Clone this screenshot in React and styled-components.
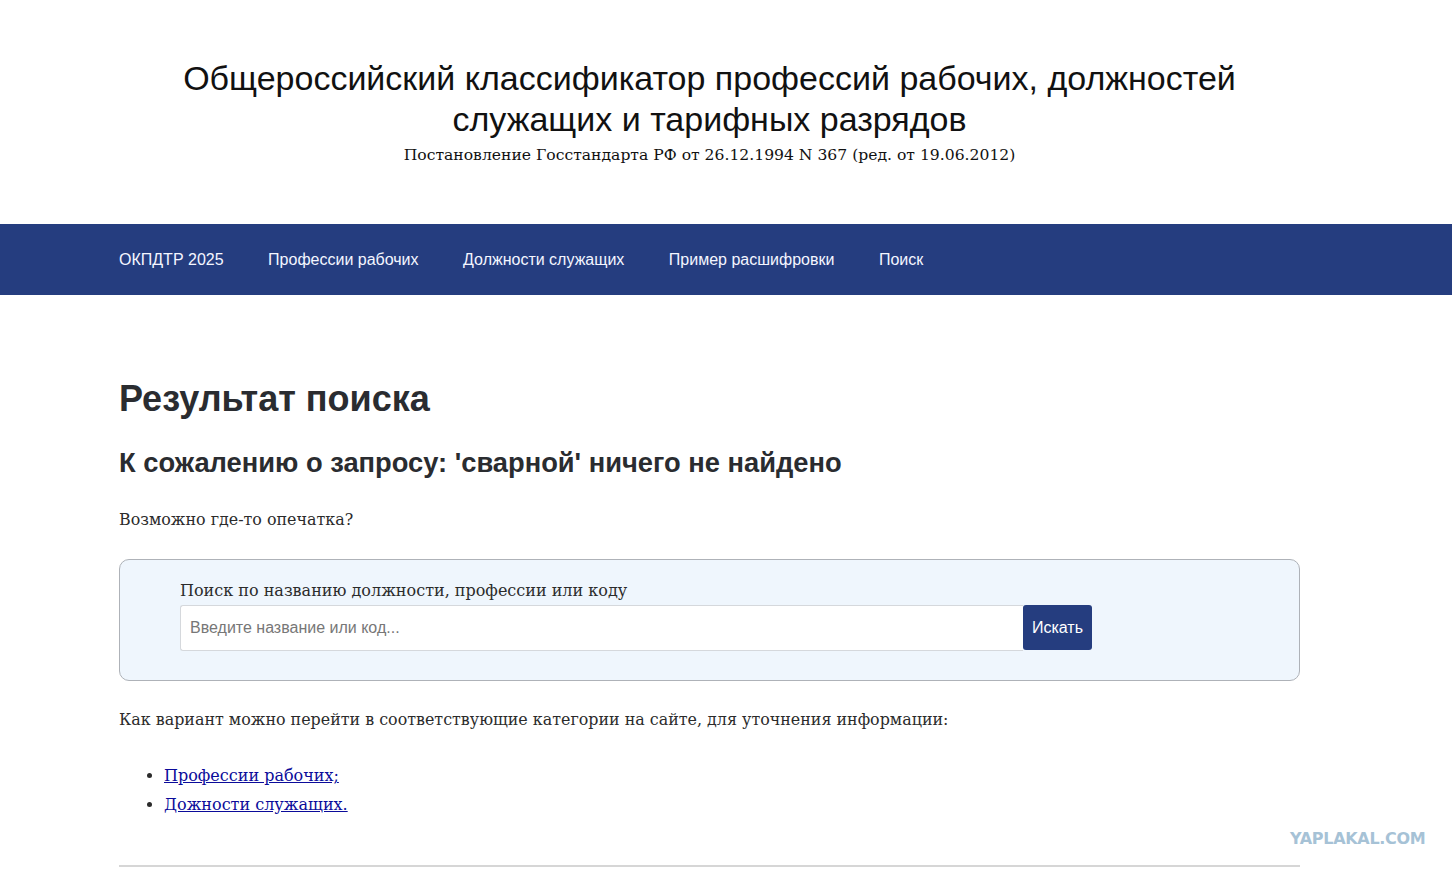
import React from "react";
import styled, { createGlobalStyle } from "styled-components";

const Global = createGlobalStyle`
  html, body { margin: 0; padding: 0; background: #fff; }
  body { font-family: "DejaVu Serif", serif; color: #2b2b2b; }
  * { box-sizing: border-box; }
`;

const Page = styled.div`
  position: relative;
  min-height: 869px;
  overflow: hidden;
`;

const Header = styled.header`
  width: 1181px;
  margin-left: 119px;
  height: 224px;
  display: flex;
  flex-direction: column;
  align-items: center;
  padding-top: 58px;
`;

const Title = styled.h1`
  margin: 0;
  font-family: "Liberation Sans", Arial, sans-serif;
  font-weight: 400;
  font-size: 34px;
  line-height: 41px;
  color: #111;
  text-align: center;
  max-width: 1100px;
`;

const Subtitle = styled.div`
  margin-top: 2px;
  font-family: "DejaVu Serif", serif;
  font-size: 15.6px;
  line-height: 26px;
  color: #111;
`;

const Nav = styled.nav`
  height: 71px;
  background: #253d7f;
  display: flex;
  align-items: center;
  padding-left: 119px;
  gap: 44.5px;
`;

const NavItem = styled.a`
  font-family: "Liberation Sans", Arial, sans-serif;
  font-size: 16px;
  color: #f4f6ff;
  text-decoration: none;
`;

const Main = styled.main`
  width: 1181px;
  margin: 0 0 0 119px;
  padding-top: 80px;
`;

const H1 = styled.h2`
  margin: 0;
  font-family: "Liberation Sans", Arial, sans-serif;
  font-weight: 700;
  font-size: 36px;
  line-height: 48px;
  color: #2a2c30;
`;

const H2 = styled.h3`
  margin: 22px 0 0;
  font-family: "Liberation Sans", Arial, sans-serif;
  font-weight: 700;
  font-size: 27.3px;
  line-height: 36px;
  color: #2a2c30;
`;

const Text = styled.p`
  margin: ${(p) => p.$mt || 0}px 0 0;
  font-size: 15.9px;
  line-height: 26px;
  color: #2b2b2b;
`;

const SearchBox = styled.form`
  margin-top: 26px;
  height: 122px;
  background: #eff6fd;
  border: 1px solid #aeb2b8;
  border-radius: 10px;
  padding: 19px 60px 0;
`;

const Label = styled.label`
  display: block;
  font-size: 16px;
  line-height: 24px;
  color: #2b2b2b;
`;

const Row = styled.div`
  display: flex;
  align-items: flex-start;
  margin-top: 2px;
`;

const Input = styled.input`
  width: 843px;
  height: 46px;
  border: 1px solid #d5d8dc;
  border-right: none;
  border-radius: 3px 0 0 3px;
  padding: 0 9px;
  font-family: "Liberation Sans", Arial, sans-serif;
  font-size: 16px;
  color: #333;
  background: #fff;
  outline: none;
  &::placeholder { color: #777; }
`;

const Button = styled.button`
  width: 69px;
  height: 45px;
  border: none;
  border-radius: 3px;
  background: #253d7f;
  color: #fff;
  font-family: "Liberation Sans", Arial, sans-serif;
  font-size: 16px;
  padding: 0;
  cursor: pointer;
`;

const List = styled.ul`
  margin: 28px 0 0;
  padding-left: 45px;
  font-size: 16px;
  line-height: 29px;
`;

const Link = styled.a`
  color: #0b0b9a;
  text-decoration: underline;
`;

const Rule = styled.hr`
  margin: 46px 0 0;
  border: none;
  border-top: 2px solid #d6d6d6;
`;

const Watermark = styled.div`
  position: absolute;
  left: 1290px;
  top: 829px;
  font-family: "DejaVu Sans", sans-serif;
  font-weight: 700;
  font-size: 16px;
  letter-spacing: -0.3px;
  color: #a6c2d6;
`;

export default function App() {
  return (
    <Page>
      <Global />
      <Header>
        <Title>
          Общероссийский классификатор профессий рабочих, должностей служащих и тарифных разрядов
        </Title>
        <Subtitle>Постановление Госстандарта РФ от 26.12.1994 N 367 (ред. от 19.06.2012)</Subtitle>
      </Header>
      <Nav>
        <NavItem href="#">ОКПДТР 2025</NavItem>
        <NavItem href="#">Профессии рабочих</NavItem>
        <NavItem href="#">Должности служащих</NavItem>
        <NavItem href="#">Пример расшифровки</NavItem>
        <NavItem href="#">Поиск</NavItem>
      </Nav>
      <Main>
        <H1>Результат поиска</H1>
        <H2>К сожалению о запросу: 'сварной' ничего не найдено</H2>
        <Text $mt={26}>Возможно где-то опечатка?</Text>
        <SearchBox onSubmit={(e) => e.preventDefault()}>
          <Label htmlFor="q">Поиск по названию должности, профессии или коду</Label>
          <Row>
            <Input id="q" placeholder="Введите название или код..." />
            <Button type="submit">Искать</Button>
          </Row>
        </SearchBox>
        <Text $mt={26}>
          Как вариант можно перейти в соответствующие категории на сайте, для уточнения информации:
        </Text>
        <List>
          <li><Link href="#">Профессии рабочих;</Link></li>
          <li><Link href="#">Дожности служащих.</Link></li>
        </List>
        <Rule />
      </Main>
      <Watermark>YAPLAKAL.COM</Watermark>
    </Page>
  );
}
